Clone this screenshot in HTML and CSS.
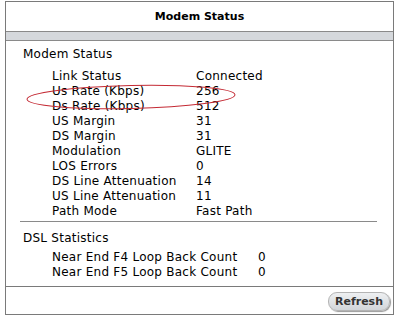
FILE: index.html
```html
<!DOCTYPE html>
<html lang="en">
<head>
    <meta charset="UTF-8">
    <title>Modem Status</title>
    <link rel="stylesheet" href="styles.css">
</head>
<body>

<div class="panel">
    <div class="title">Modem Status</div>
    <div class="bar"></div>

    <div class="content">
        <div class="section">Modem Status</div>
        <table class="info">
            <tr><td class="label">Link Status</td><td>Connected</td></tr>
            <tr><td class="label">Us Rate (Kbps)</td><td>256</td></tr>
            <tr><td class="label">Ds Rate (Kbps)</td><td>512</td></tr>
            <tr><td class="label">US Margin</td><td>31</td></tr>
            <tr><td class="label">DS Margin</td><td>31</td></tr>
            <tr><td class="label">Modulation</td><td>GLITE</td></tr>
            <tr><td class="label">LOS Errors</td><td>0</td></tr>
            <tr><td class="label">DS Line Attenuation</td><td>14</td></tr>
            <tr><td class="label">US Line Attenuation</td><td>11</td></tr>
            <tr><td class="label">Path Mode</td><td>Fast Path</td></tr>
        </table>

        <hr class="divider">

        <div class="section sub">DSL Statistics</div>
        <table class="info stats">
            <tr><td class="label">Near End F4 Loop Back Count</td><td>0</td></tr>
            <tr><td class="label">Near End F5 Loop Back Count</td><td>0</td></tr>
        </table>

        <!-- marca roja a mano sobre las tasas -->
        <svg class="mark" width="214" height="30" viewBox="0 0 214 30">
            <ellipse cx="107" cy="15" rx="104" ry="11.5" transform="rotate(-1.2 107 15)" fill="none" stroke="#c42a34" stroke-width="1"/>
        </svg>
    </div>

    <div class="footer">
        <button class="refresh">Refresh</button>
    </div>
</div>

</body>
</html>
```

FILE: styles.css
```css
body {
    margin: 0;
    padding: 1px 0 0 5px;
    background-color: #fff;
    font-family: "DejaVu Sans", Verdana, sans-serif;
    color: #000;
}

.panel {
    width: 387px;
    border: 1px solid #7a7a7a;
}

.title {
    height: 29px;
    line-height: 29px;
    text-align: center;
    font-size: 11px;
    font-weight: bold;
    border-bottom: 1px solid #8a8a8a;
}

.bar {
    height: 8px;
    background-color: #d5d8dc;
    border-bottom: 1px solid #8a8a8a;
}

.content {
    position: relative;
    padding: 6px 0 6px 17px;
    font-size: 12px;
    line-height: 15px;
    letter-spacing: 0.25px;
}

.section {
    margin-bottom: 7px;
}

.section.sub {
    margin-bottom: 4px;
}

.info {
    border-collapse: collapse;
    margin-left: 29px;
}

.info td {
    padding: 0;
    height: 15px;
    white-space: nowrap;
}

.info .label {
    width: 144px;
}

.stats .label {
    width: 206px;
}

.divider {
    margin: 2px 16px 9px -3px;
    border: none;
    border-top: 1px solid #8a8a8a;
}

.mark {
    position: absolute;
    top: 41px;
    left: 18px;
}

.footer {
    border-top: 1px solid #7a7a7a;
    height: 27px;
    display: flex;
    justify-content: flex-end;
    align-items: center;
    padding-right: 3px;
}

.refresh {
    width: 62px;
    height: 19px;
    margin-top: 1px;
    padding: 0;
    font-family: "DejaVu Sans", Verdana, sans-serif;
    font-size: 11px;
    font-weight: bold;
    color: #333;
    border: 1px solid #b4b4b4;
    border-radius: 9px;
    background: linear-gradient(#eef0f2, #d2d5d9);
    box-shadow: 1px 1px 1px #999;
}
```
